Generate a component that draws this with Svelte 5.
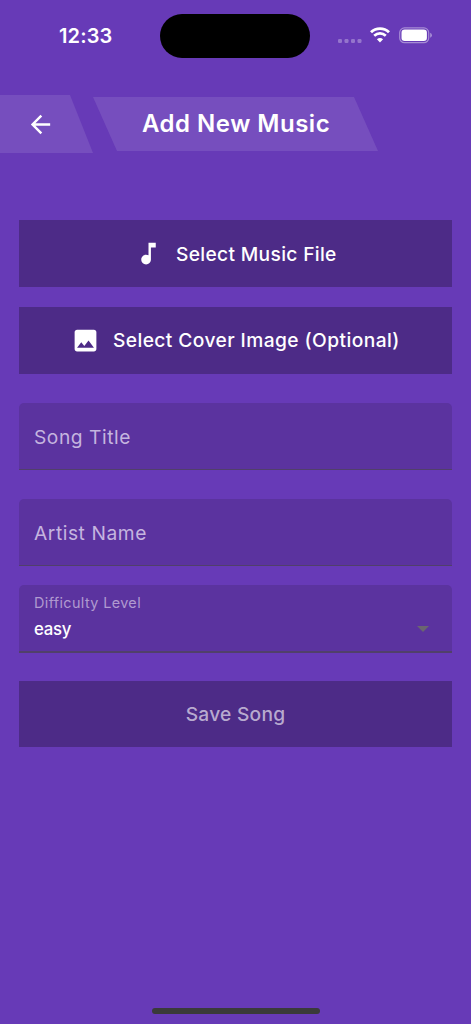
<script>
  const fields = ['Song Title', 'Artist Name'];
</script>

<main class="screen">
  <header class="status">
    <span class="time">12:33</span>
    <div class="island"></div>
    <div class="indicators">
      <svg class="signal" width="24" height="4" viewBox="0 0 24 4">
        {#each [0, 6.5, 13, 19.5] as x}
          <rect {x} y="0" width="4" height="4" rx="1.2" />
        {/each}
      </svg>
      <svg class="wifi" width="20" height="16" viewBox="0 0 20 16" fill="none" stroke="#fff">
        <path d="M1 5.200C6 .4 14 .4 19 5.200" stroke-width="2.9" />
        <path d="M4.200 8.800C7.600 5.600 12.400 5.600 15.800 8.800" stroke-width="2.7" />
        <path d="M10 15.500 6.900 12.300Q10 9.700 13.100 12.300Z" fill="#fff" stroke="none" />
      </svg>
      <svg class="battery" width="34" height="17" viewBox="0 0 34 17">
        <rect x=".7" y=".9" width="29" height="14.8" rx="4.8" fill="none" stroke="#fff" stroke-opacity=".42" stroke-width="1.2" />
        <rect x="2.5" y="2.6" width="25.4" height="11.4" rx="3.2" fill="#fff" />
        <path d="M31.200 5.800q1.700.7 1.700 2.500t-1.700 2.500z" fill="#fff" fill-opacity=".45" />
      </svg>
    </div>
  </header>

  <nav class="bar">
    <button class="back" aria-label="Back">
      <svg width="29" height="29" viewBox="0 0 24 24" fill="#fff">
        <path d="M20 11H7.830l5.590-5.590L12 4l-8 8 8 8 1.410-1.410L7.830 13H20v-2z" />
      </svg>
    </button>
    <h1>Add New Music</h1>
  </nav>

  <form>
    <button class="action music" type="button">
      <svg width="29" height="29" viewBox="0 0 24 24" fill="#fff">
        <path d="M12 3v10.550c-.59-.34-1.270-.55-2-.55-2.210 0-4 1.790-4 4s1.790 4 4 4 4-1.790 4-4V7h4V3h-6z" />
      </svg>
      <span>Select Music File</span>
    </button>
    <button class="action cover" type="button">
      <svg width="29" height="29" viewBox="0 0 24 24" fill="#fff">
        <path d="M21 19V5c0-1.100-.9-2-2-2H5c-1.100 0-2 .9-2 2v14c0 1.100.9 2 2 2h14c1.100 0 2-.9 2-2zM8.500 13.500l2.500 3.010L14.500 12l4.500 6H5l3.500-4.500z" />
      </svg>
      <span>Select Cover Image (Optional)</span>
    </button>
    {#each fields as label}
      <div class="field"><span>{label}</span></div>
    {/each}
    <div class="field select">
      <span class="label">Difficulty Level</span>
      <span class="value">easy</span>
      <svg width="12" height="6" viewBox="0 0 12 6"><path d="M0 0h12L6 6z" fill="#6b6570" /></svg>
    </div>
    <button class="action save" type="button"><span>Save Song</span></button>
  </form>

  <div class="home"></div>
</main>

<style>
  :global(body) {
    margin: 0;
    background: #673ab7;
  }
  .screen {
    box-sizing: border-box;
    width: 471px;
    height: 1024px;
    display: flex;
    flex-direction: column;
    background: #673ab7;
    color: #fff;
    font-family: Inter, 'Liberation Sans', sans-serif;
    overflow: hidden;
  }
  button {
    border: 0;
    padding: 0;
    margin: 0;
    font: inherit;
    color: inherit;
  }
  svg {
    display: block;
    flex: none;
  }
  span,
  h1 {
    white-space: nowrap;
  }
  .status {
    height: 58px;
    padding-top: 14px;
    box-sizing: border-box;
    display: grid;
    grid-template-columns: 160.400px 150px 1fr;
  }
  .time {
    padding-left: 59px;
    font-size: 20px;
    line-height: 44px;
    font-weight: 600;
    letter-spacing: .15px;
  }
  .island {
    height: 44px;
    border-radius: 22px;
    background: #000;
  }
  .indicators {
    display: flex;
    padding-left: 27.500px;
  }
  .signal {
    margin-top: 25px;
    fill: #fff;
    fill-opacity: .3;
  }
  .wifi {
    margin: 13px 0 0 8px;
  }
  .battery {
    margin: 13px 0 0 9px;
  }
  .bar {
    display: flex;
    align-items: center;
    height: 58px;
    margin-top: 37px;
  }
  .back {
    width: 93px;
    height: 58px;
    padding-left: 26px;
    box-sizing: border-box;
    background: rgba(255, 255, 255, .1);
    clip-path: polygon(0 0, 70px 0, 100% 100%, 0 100%);
  }
  h1 {
    margin: 0;
    width: 285px;
    height: 54px;
    padding-left: 49px;
    box-sizing: border-box;
    background: rgba(255, 255, 255, .1);
    clip-path: polygon(0 0, 261px 0, 100% 100%, 24px 100%);
    font-size: 24px;
    line-height: 54px;
    font-weight: 600;
    letter-spacing: .5px;
  }
  form {
    display: flex;
    flex-direction: column;
    margin: 67px 19px 0;
  }
  .action {
    display: flex;
    align-items: center;
    justify-content: center;
    height: 67.200px;
    background: #4d2b87;
    font-size: 19.200px;
    font-weight: 450;
    letter-spacing: .42px;
  }
  .action svg {
    margin-right: 12.700px;
  }
  .music {
    letter-spacing: .33px;
  }
  .cover {
    margin: 19.500px 0 29px;
  }
  .field {
    box-sizing: border-box;
    height: 67px;
    padding: 0 15px;
    border-bottom: 1px solid #51406a;
    border-radius: 5px 5px 0 0;
    background: #5b339f;
    color: #c5b5df;
    font-size: 19.200px;
    line-height: 68px;
    letter-spacing: .56px;
    margin-bottom: 29.200px;
  }
  .field + .field.select {
    margin-top: -10px;
  }
  .field.select {
    display: grid;
    grid-template-columns: 1fr auto;
    grid-template-rows: 35px 18px;
    height: 67.800px;
    margin-bottom: 28.200px;
    border-bottom-width: 2px;
    padding-right: 23px;
  }
  .label {
    grid-column: 1 / 3;
    font-size: 14.400px;
    line-height: 36px;
    letter-spacing: .38px;
    color: #b09ad0;
  }
  .value {
    font-size: 16.800px;
    line-height: 18px;
    font-weight: 500;
    letter-spacing: -.3px;
    color: #fff;
  }
  .select svg {
    margin-top: 6px;
  }
  .save {
    height: 66px;
    color: #b8aacf;
    letter-spacing: .25px;
  }
  .home {
    width: 168px;
    height: 6px;
    border-radius: 3px;
    background: #3a3a3a;
    margin: auto auto 10px 152px;
  }
</style>
